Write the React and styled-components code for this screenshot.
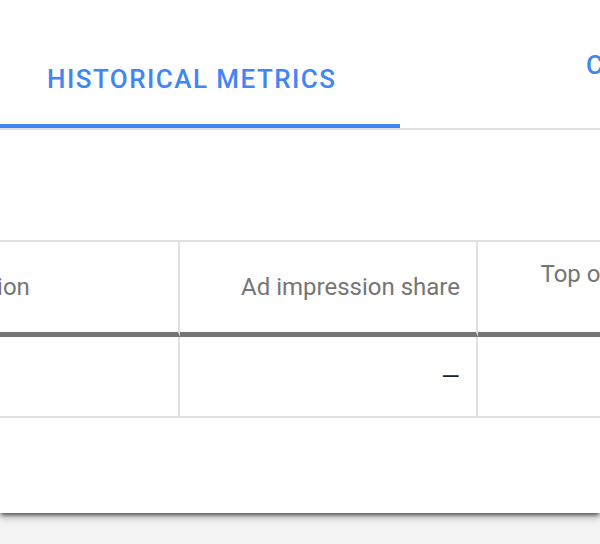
import React from 'react';
import styled, { createGlobalStyle } from 'styled-components';

const GlobalStyle = createGlobalStyle`
  html, body {
    margin: 0;
    padding: 0;
    background: #f4f4f4;
    font-family: Roboto, "Liberation Sans", sans-serif;
  }

  body {
    padding-bottom: 31px;
  }
`;

const Card = styled.div`
  position: relative;
  width: 600px;
  height: 513px;
  background: #fff;
  overflow: hidden;
  box-shadow: 0 3px 4px -1px rgba(0, 0, 0, 0.6), 0 5px 8px rgba(0, 0, 0, 0.2);
`;

const TabBar = styled.div`
  display: flex;
  border-bottom: 2px solid #e0e0e0;
  width: 1000px;
`;

const Tab = styled.div`
  flex: 0 0 ${(p) => p.width}px;
  box-sizing: border-box;
  height: 128px;
  padding: 33px 0 0 ${(p) => p.pad}px;
  display: flex;
  align-items: center;
  border-bottom: 4px solid ${(p) => (p.active ? '#4285f4' : 'transparent')};
  color: #4285f4;
  font-size: 26px;
  font-weight: 500;
  letter-spacing: 1.45px;
  line-height: 28px;
  text-transform: uppercase;
  text-align: center;
  white-space: pre;
`;

const Spacer = styled.div`
  height: 110px;
`;

const Table = styled.table`
  border-collapse: separate;
  border-spacing: 0;
  table-layout: fixed;
  width: ${(p) => p.width}px;
  margin-left: ${(p) => p.offset}px;
  border-top: 2px solid #e0e0e0;
  border-bottom: 2px solid #e0e0e0;
`;

const HeadCell = styled.th`
  height: 95px;
  padding: 0 16px 0 ${(p) => p.padLeft || 16}px;
  box-sizing: border-box;
  border-right: 2px solid #e0e0e0;
  border-bottom: 5px solid #757575;
  color: #757575;
  font-size: 24px;
  font-weight: 400;
  line-height: 26px;
  text-align: ${(p) => p.align || 'right'};
  vertical-align: middle;
  white-space: pre;
`;

const Cell = styled.td`
  height: 79px;
  padding: 0 16px;
  box-sizing: border-box;
  border-right: 2px solid #e0e0e0;
  color: #212121;
  font-size: 24px;
  text-align: right;
  vertical-align: middle;
`;

const columns = [
  { key: 'competition', label: 'Competition', width: 305, align: 'left', padLeft: 24, value: '' },
  { key: 'share', label: 'Ad impression share', width: 298, value: '—' },
  { key: 'top', label: 'Top of page impression\nshare', width: 332, value: '' },
];

const tableWidth = columns.reduce((sum, c) => sum + c.width, 0);

export default function App() {
  return (
    <>
      <GlobalStyle />
      <Card>
        <TabBar>
          <Tab active width={400} pad={47}>
            Historical metrics
          </Tab>
          <Tab width={500} pad={186}>
            {'Competitor\ndata'}
          </Tab>
        </TabBar>
        <Spacer />
        <Table offset={-125} width={tableWidth}>
          <colgroup>
            {columns.map((c) => (
              <col key={c.key} style={{ width: c.width }} />
            ))}
          </colgroup>
          <thead>
            <tr>
              {columns.map((c) => (
                <HeadCell key={c.key} align={c.align} padLeft={c.padLeft}>
                  {c.label}
                </HeadCell>
              ))}
            </tr>
          </thead>
          <tbody>
            <tr>
              {columns.map((c) => (
                <Cell key={c.key}>{c.value}</Cell>
              ))}
            </tr>
          </tbody>
        </Table>
      </Card>
    </>
  );
}
